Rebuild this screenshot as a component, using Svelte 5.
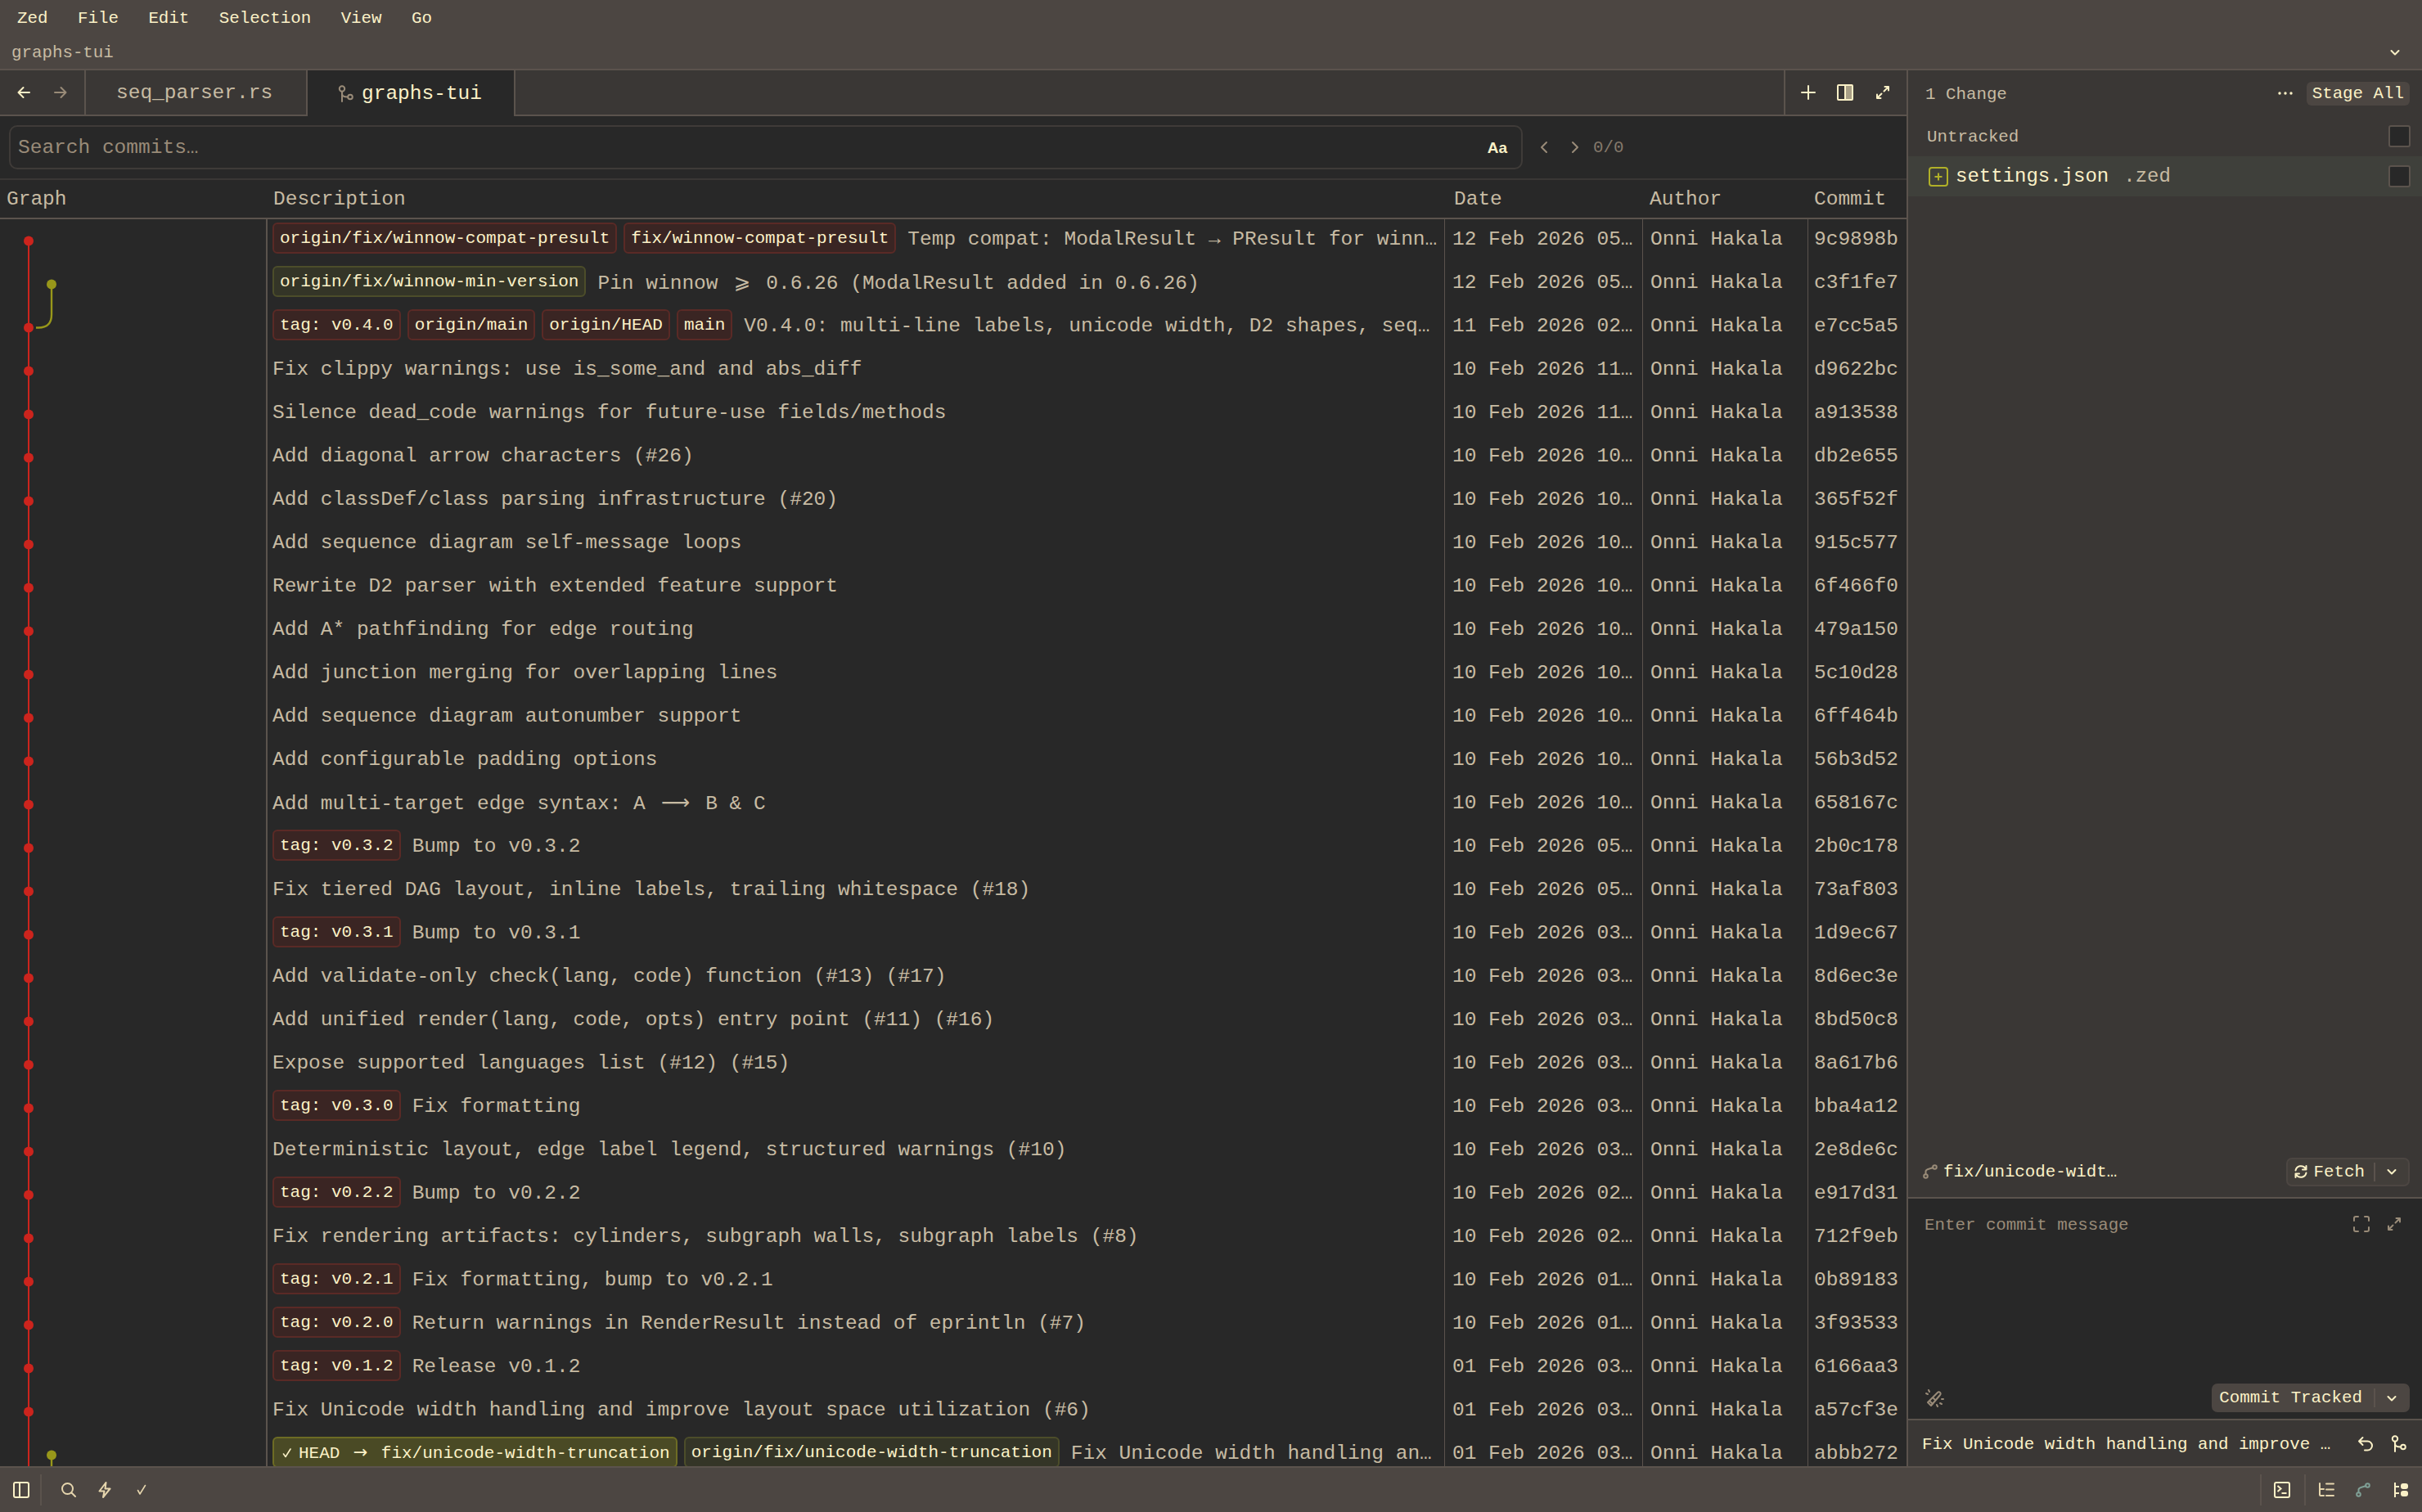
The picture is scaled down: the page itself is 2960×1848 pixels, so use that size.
<script>
  const menu = ["Zed", "File", "Edit", "Selection", "View", "Go"];
  const rowHeight = 53;

  // tags: r = red lane, g = green lane, h = checked-out head
  const commits = [
    { tags: [["r", "origin/fix/winnow-compat-presult"], ["r", "fix/winnow-compat-presult"]], text: ["Temp compat: ModalResult → PResult for winn…"], date: "12 Feb 2026 05…", hash: "9c9898b" },
    { tags: [["g", "origin/fix/winnow-min-version"]], text: ["Pin winnow ", { wide: "⩾", cells: 2 }, " 0.6.26 (ModalResult added in 0.6.26)"], date: "12 Feb 2026 05…", hash: "c3f1fe7" },
    { tags: [["r", "tag: v0.4.0"], ["r", "origin/main"], ["r", "origin/HEAD"], ["r", "main"]], text: ["V0.4.0: multi-line labels, unicode width, D2 shapes, seq…"], date: "11 Feb 2026 02…", hash: "e7cc5a5" },
    { text: ["Fix clippy warnings: use is_some_and and abs_diff"], date: "10 Feb 2026 11…", hash: "d9622bc" },
    { text: ["Silence dead_code warnings for future-use fields/methods"], date: "10 Feb 2026 11…", hash: "a913538" },
    { text: ["Add diagonal arrow characters (#26)"], date: "10 Feb 2026 10…", hash: "db2e655" },
    { text: ["Add classDef/class parsing infrastructure (#20)"], date: "10 Feb 2026 10…", hash: "365f52f" },
    { text: ["Add sequence diagram self-message loops"], date: "10 Feb 2026 10…", hash: "915c577" },
    { text: ["Rewrite D2 parser with extended feature support"], date: "10 Feb 2026 10…", hash: "6f466f0" },
    { text: ["Add A* pathfinding for edge routing"], date: "10 Feb 2026 10…", hash: "479a150" },
    { text: ["Add junction merging for overlapping lines"], date: "10 Feb 2026 10…", hash: "5c10d28" },
    { text: ["Add sequence diagram autonumber support"], date: "10 Feb 2026 10…", hash: "6ff464b" },
    { text: ["Add configurable padding options"], date: "10 Feb 2026 10…", hash: "56b3d52" },
    { text: ["Add multi-target edge syntax: A ", { wide: "⟶", cells: 3 }, " B & C"], date: "10 Feb 2026 10…", hash: "658167c" },
    { tags: [["r", "tag: v0.3.2"]], text: ["Bump to v0.3.2"], date: "10 Feb 2026 05…", hash: "2b0c178" },
    { text: ["Fix tiered DAG layout, inline labels, trailing whitespace (#18)"], date: "10 Feb 2026 05…", hash: "73af803" },
    { tags: [["r", "tag: v0.3.1"]], text: ["Bump to v0.3.1"], date: "10 Feb 2026 03…", hash: "1d9ec67" },
    { text: ["Add validate-only check(lang, code) function (#13) (#17)"], date: "10 Feb 2026 03…", hash: "8d6ec3e" },
    { text: ["Add unified render(lang, code, opts) entry point (#11) (#16)"], date: "10 Feb 2026 03…", hash: "8bd50c8" },
    { text: ["Expose supported languages list (#12) (#15)"], date: "10 Feb 2026 03…", hash: "8a617b6" },
    { tags: [["r", "tag: v0.3.0"]], text: ["Fix formatting"], date: "10 Feb 2026 03…", hash: "bba4a12" },
    { text: ["Deterministic layout, edge label legend, structured warnings (#10)"], date: "10 Feb 2026 03…", hash: "2e8de6c" },
    { tags: [["r", "tag: v0.2.2"]], text: ["Bump to v0.2.2"], date: "10 Feb 2026 02…", hash: "e917d31" },
    { text: ["Fix rendering artifacts: cylinders, subgraph walls, subgraph labels (#8)"], date: "10 Feb 2026 02…", hash: "712f9eb" },
    { tags: [["r", "tag: v0.2.1"]], text: ["Fix formatting, bump to v0.2.1"], date: "10 Feb 2026 01…", hash: "0b89183" },
    { tags: [["r", "tag: v0.2.0"]], text: ["Return warnings in RenderResult instead of eprintln (#7)"], date: "10 Feb 2026 01…", hash: "3f93533" },
    { tags: [["r", "tag: v0.1.2"]], text: ["Release v0.1.2"], date: "01 Feb 2026 03…", hash: "6166aa3" },
    { text: ["Fix Unicode width handling and improve layout space utilization (#6)"], date: "01 Feb 2026 03…", hash: "a57cf3e" },
    { tags: [["h", "HEAD"], ["g", "origin/fix/unicode-width-truncation"]], text: ["Fix Unicode width handling an…"], date: "01 Feb 2026 03…", hash: "abbb272" }
  ];

  const dotY = (i) => 26.5 + i * rowHeight;
  // commits that sit on the second lane
  const sideLane = [1, 28];
</script>

{#snippet chevron(cls = "")}
  <svg class="ic {cls}" width="16" height="16" viewBox="0 0 16 16"><path d="M3.5 6l4.5 4.5L12.5 6" /></svg>
{/snippet}

{#snippet expand(cls = "")}
  <svg class="ic {cls}" width="20" height="20" viewBox="0 0 20 20"><path d="M11.5 8.5L17 3M12.5 3H17V7.5M8.5 11.5L3 17M3 12.5V17H7.5" /></svg>
{/snippet}

{#snippet graphIcon(cls = "")}
  <svg class="ic {cls}" width="20" height="22" viewBox="0 0 20 22"><circle cx="5" cy="4.5" r="3.2" /><path d="M5 7.7V20M5 10c0 3.5 2 4.5 7 4.5" /><circle cx="15" cy="14.5" r="2.8" /></svg>
{/snippet}

{#snippet branchIcon(cls = "")}
  <svg class="ic {cls}" width="18" height="18" viewBox="0 0 18 18"><circle cx="3.5" cy="14.5" r="2.3" /><circle cx="14.5" cy="3.5" r="2.3" /><path d="M3.5 12.2V8.500C3.500 5.500 8 6 12.300 4" /></svg>
{/snippet}

<div class="window">
  <header class="titlebar">
    <nav class="menu">
      {#each menu as item}<span>{item}</span>{/each}
    </nav>
    <div class="project">
      <span>graphs-tui</span>
      {@render chevron("strong")}
    </div>
  </header>

  <main class="main">
    <section class="left">
      <div class="tabbar">
        <div class="nav-btns">
          <svg class="ic strong" width="18" height="18" viewBox="0 0 18 18"><path d="M16 9H2.5M8.5 3L2.5 9l6 6" /></svg>
          <svg class="ic dim" width="18" height="18" viewBox="0 0 18 18"><path d="M2 9h13.5M9.5 3l6 6-6 6" /></svg>
        </div>
        <div class="tab">seq_parser.rs</div>
        <div class="tab active">
          {@render graphIcon("muted")}
          <span>graphs-tui</span>
        </div>
        <div class="tab-fill"></div>
        <div class="tab-actions">
          <svg class="ic strong" width="18" height="18" viewBox="0 0 18 18"><path d="M9 1v16M1 9h16" /></svg>
          <svg width="20" height="20" viewBox="0 0 20 20"><rect x="1" y="1" width="18" height="18" rx="1" fill="none" stroke="#fbf1c7" stroke-width="2" /><rect x="10" y="2" width="8" height="16" fill="#a89f86" /><path d="M10 1v18" stroke="#fbf1c7" stroke-width="2" /></svg>
          {@render expand("strong")}
        </div>
      </div>

      <div class="searchbar">
        <div class="search-input">
          <span class="placeholder">Search commits…</span>
          <b class="aa">Aa</b>
        </div>
        <svg class="ic muted nav-chev" width="14" height="18" viewBox="0 0 14 18"><path d="M10 3L4 9l6 6" /></svg>
        <svg class="ic muted nav-chev" width="14" height="18" viewBox="0 0 14 18"><path d="M4 3l6 6-6 6" /></svg>
        <span class="count">0/0</span>
      </div>

      <div class="table-head">
        <span class="c-graph">Graph</span>
        <span class="c-desc">Description</span>
        <span class="c-date">Date</span>
        <span class="c-author">Author</span>
        <span class="c-hash">Commit</span>
      </div>

      <div class="table">
        <svg class="graph" width="325" height={commits.length * rowHeight}>
          <path d="M35 {dotY(0)}V{dotY(29)}" stroke="#cc241d" stroke-width="2" fill="none" />
          <path d="M63 {dotY(1)}V{dotY(2) - 16}Q63 {dotY(2)} 47 {dotY(2)}H44" stroke="#98971a" stroke-width="2.4" fill="none" />
          <path d="M63 {dotY(28)}V{dotY(29)}" stroke="#98971a" stroke-width="2.4" fill="none" />
          {#each commits as _, i}
            {#if sideLane.includes(i)}
              <circle cx="63" cy={dotY(i)} r="6" fill="#98971a" />
            {:else}
              <circle cx="35" cy={dotY(i)} r="6" fill="#cc241d" />
            {/if}
          {/each}
        </svg>
        <div class="rows">
          {#each commits as c}
            <div class="row">
              <div class="cell desc">
                {#each c.tags ?? [] as [kind, label]}
                  <span class="tag {kind}">{#if kind === "h"}<svg class="ic check" width="14" height="16" viewBox="0 0 14 16"><path d="M2.500 9l2.500 3.500L11 3" /></svg><span>{label}<span class="wide w2">→</span>fix/unicode-width-truncation</span>{:else}{label}{/if}</span>
                {/each}
                <span class="msg">{#each c.text as part}{#if typeof part === "string"}{part}{:else}<span class="wide w{part.cells}">{part.wide}</span>{/if}{/each}</span>
              </div>
              <div class="cell date">{c.date}</div>
              <div class="cell author">Onni Hakala</div>
              <div class="cell hash">{c.hash}</div>
            </div>
          {/each}
        </div>
      </div>
    </section>

    <aside class="panel">
      <div class="changes">
        <span class="changes-label">1 Change</span>
        <span class="changes-right">
          <svg width="20" height="6" viewBox="0 0 20 6" fill="#fbf1c7"><circle cx="3" cy="3" r="1.700" /><circle cx="10" cy="3" r="1.700" /><circle cx="17" cy="3" r="1.700" /></svg>
          <span class="stage">Stage All</span>
        </span>
      </div>
      <div class="section-head">
        <span class="section-label">Untracked</span>
        <span class="checkbox"></span>
      </div>
      <div class="file-row">
        <svg width="24" height="24" viewBox="0 0 24 24" fill="none" stroke="#b0b028" stroke-width="2"><rect x="1" y="1" width="22" height="22" rx="3" /><path d="M12 7.5v9M7.5 12h9" /></svg>
        <span class="file-name">settings.json</span>
        <span class="file-dir">.zed</span>
        <span class="checkbox end"></span>
      </div>
      <div class="panel-fill"></div>
      <div class="branch-row">
        {@render branchIcon("muted")}
        <span class="branch-name">fix/unicode-widt…</span>
        <div class="split-btn fetch">
          <span class="split-main">
            <svg class="ic strong" width="18" height="18" viewBox="0 0 18 18"><path d="M2.5 7.5A6.7 6.7 0 0 1 14.5 5l1 1.5M15.5 2v4.500h-4.500M15.500 10.500A6.700 6.700 0 0 1 3.500 13l-1-1.500M2.500 16v-4.500H7" /></svg>
            Fetch
          </span>
          <span class="split-chev">{@render chevron("strong")}</span>
        </div>
      </div>
      <div class="editor">
        <div class="editor-top">
          <span class="placeholder small">Enter commit message</span>
          <span class="editor-icons">
            <svg class="ic muted" width="20" height="20" viewBox="0 0 20 20"><path d="M1 6V3a2 2 0 0 1 2-2h3M14 1h3a2 2 0 0 1 2 2v3M19 14v3a2 2 0 0 1-2 2h-3M6 19H3a2 2 0 0 1-2-2v-3" /></svg>
            {@render expand("muted")}
          </span>
        </div>
        <div class="editor-bottom">
          <svg class="ic muted" width="24" height="24" viewBox="0 0 24 24"><path d="M8 21L4 17 16 5c2-2 5 1 3 3zM10 19l-3-3M13 14l-3-3M2 6l2 1M5 2l1 2M19 18l2 1M15 20l1 2M21 13l2 0" /></svg>
          <div class="split-btn commit">
            <span class="split-main">Commit Tracked</span>
            <span class="split-chev">{@render chevron("strong")}</span>
          </div>
        </div>
      </div>
      <div class="last-commit">
        <span class="last-text">Fix Unicode width handling and improve …</span>
        <svg class="ic strong" width="20" height="20" viewBox="0 0 20 20"><path d="M6.500 2L2 6.500 6.500 11M2 6.500h10.500a5.500 5.500 0 0 1 0 11H9" /></svg>
        {@render graphIcon("strong")}
      </div>
    </aside>
  </main>

  <footer class="statusbar">
    <svg width="20" height="20" viewBox="0 0 20 20" fill="none" stroke="#fbf1c7" stroke-width="2"><rect x="1" y="1" width="18" height="18" rx="2" /><path d="M8 1v18" /></svg>
    <span class="vsep first"></span>
    <svg class="ic muted-light s-search" width="20" height="20" viewBox="0 0 20 20"><circle cx="8.500" cy="8.500" r="6.500" /><path d="M13.500 13.500L18 18" /></svg>
    <svg class="ic muted-light s-bolt" width="18" height="20" viewBox="0 0 18 20"><path d="M10.500 1L2.500 11.500h6L7 19l8.500-10.500h-6z" /></svg>
    <svg class="ic muted-light s-check" width="16" height="20" viewBox="0 0 16 20"><path d="M3.500 10.500l2.500 4.500L12.500 4.500" /></svg>
    <span class="status-fill"></span>
    <span class="vsep"></span>
    <svg class="s-term" width="20" height="20" viewBox="0 0 20 20" fill="none" stroke="#fbf1c7" stroke-width="2"><rect x="1" y="1" width="18" height="18" rx="2" /><path d="M4.500 5l4 3.500-4 3.500M9.500 14h6" /></svg>
    <span class="vsep"></span>
    <svg class="ic muted-light s-list" width="20" height="18" viewBox="0 0 20 18"><path d="M2 1v14a1 1 0 0 0 1 1h4M2 8h5M10 1.500h9M10 8.500h9M10 16h9" /></svg>
    <svg class="ic teal s-branch" width="18" height="18" viewBox="0 0 18 18"><circle cx="3.500" cy="14.500" r="2.300" /><circle cx="14.500" cy="3.500" r="2.300" /><path d="M3.500 12.200V8.500C3.500 5.500 8 6 12.300 4" /></svg>
    <svg class="s-tree" width="18" height="18" viewBox="0 0 18 18" fill="#fbf1c7"><path d="M1 0h2v18H1zM3 4h4v2H3zM3 12h4v2H3z" /><rect x="9" y="1" width="9" height="7" rx="3" /><rect x="9" y="10" width="9" height="7" rx="3" /></svg>
  </footer>
</div>

<style>
  :global(body) {
    margin: 0;
    background: #4c4642;
  }

  .window {
    display: flex;
    flex-direction: column;
    width: 2960px;
    height: 1848px;
    overflow: hidden;
    background: #4c4642;
    color: #c7bba3;
    font-family: "Liberation Mono", monospace;
    font-size: 20.8px;
    font-variant-ligatures: none;
  }

  .ic {
    flex: none;
    fill: none;
    stroke: currentColor;
    stroke-width: 2;
    stroke-linecap: round;
    stroke-linejoin: round;
  }
  .strong { color: #fbf1c7; }
  .muted { color: #998b78; }
  .dim { color: #998b78; }
  .muted-light { color: #e5d5ad; }
  .teal { color: #7f9f95; }

  .titlebar {
    flex: none;
    height: 84px;
    border-bottom: 2px solid #5b534d;
  }
  .menu {
    display: flex;
    align-items: center;
    gap: 36.5px;
    height: 44px;
    padding-left: 21px;
    color: #fbf1c7;
  }
  .project {
    display: flex;
    align-items: center;
    justify-content: space-between;
    height: 40px;
    padding: 0 25px 0 14px;
  }

  .main {
    display: flex;
    flex: 1;
    min-height: 0;
  }

  .left {
    display: flex;
    flex-direction: column;
    flex: none;
    width: 2330px;
    border-right: 2px solid #5b534d;
    background: #282828;
    font-size: 24.5px;
  }

  .tabbar {
    display: flex;
    flex: none;
    height: 56px;
    background: #3a3735;
  }
  .nav-btns {
    display: flex;
    align-items: center;
    gap: 27px;
    box-sizing: border-box;
    width: 105px;
    padding-left: 20px;
    border-right: 2px solid #5b534d;
    border-bottom: 2px solid #5b534d;
  }
  .tab {
    display: flex;
    align-items: center;
    box-sizing: border-box;
    width: 271px;
    padding: 1px 0 0 37px;
    border-right: 2px solid #5b534d;
    border-bottom: 2px solid #5b534d;
  }
  .tab.active {
    gap: 9px;
    width: 254px;
    border-bottom: none;
    background: #282828;
    color: #fbf1c7;
  }
  .tab-fill {
    flex: 1;
    border-bottom: 2px solid #5b534d;
  }
  .tab-actions {
    display: flex;
    align-items: center;
    gap: 26px;
    box-sizing: border-box;
    width: 150px;
    padding-left: 19px;
    border-left: 2px solid #5b534d;
    border-bottom: 2px solid #5b534d;
  }

  .searchbar {
    display: flex;
    align-items: center;
    flex: none;
    height: 76px;
    padding-left: 11px;
  }
  .search-input {
    display: flex;
    align-items: center;
    justify-content: space-between;
    box-sizing: border-box;
    width: 1850px;
    height: 54px;
    padding: 1px 17px 0 9px;
    border: 2px solid #3f3b38;
    border-radius: 10px;
  }
  .placeholder {
    color: #998b78;
  }
  .placeholder.small {
    font-size: 20.8px;
  }
  .aa {
    color: #fbf1c7;
    font-family: "Liberation Sans", sans-serif;
    font-size: 19px;
  }
  .nav-chev {
    margin-left: 19px;
  }
  .nav-chev + .nav-chev {
    margin-left: 24px;
  }
  .count {
    margin-left: 15px;
    color: #85796b;
    font-size: 20.8px;
  }

  .table-head {
    display: flex;
    align-items: center;
    flex: none;
    box-sizing: border-box;
    height: 50px;
    padding-top: 1px;
    border-top: 2px solid #3a3735;
    border-bottom: 2px solid #5b534d;
  }
  .c-graph { width: 326px; padding-left: 8px; box-sizing: border-box; }
  .c-desc { width: 1442px; padding-left: 8px; box-sizing: border-box; }
  .c-date { width: 240px; padding-left: 9px; box-sizing: border-box; }
  .c-author { width: 201px; padding-left: 8px; box-sizing: border-box; }
  .c-hash { padding-left: 8px; }

  .table {
    display: flex;
    flex: 1;
    min-height: 0;
    overflow: hidden;
  }
  .graph {
    flex: none;
  }
  .rows {
    flex: 1;
    min-width: 0;
  }
  .row {
    display: flex;
    height: 53px;
  }
  .cell {
    display: flex;
    align-items: center;
    box-sizing: border-box;
    padding-bottom: 5px;
    border-left: 1px solid #5b534d;
    white-space: pre;
  }
  .desc {
    gap: 8px;
    width: 1440px;
    padding-left: 6px;
    border-left-width: 2px;
    overflow: hidden;
  }
  .date { width: 242px; padding-left: 9px; }
  .author { width: 202px; padding-left: 9px; }
  .hash { width: 121px; padding-left: 7px; }

  .tag {
    display: flex;
    align-items: center;
    flex: none;
    box-sizing: border-box;
    height: 38px;
    margin-bottom: 2px;
    padding: 1px 7px 0;
    border: 2px solid;
    border-radius: 6px;
    color: #fbf1c7;
    font-size: 21px;
  }
  .tag.r { background: #3a2523; border-color: #5a2a26; }
  .tag.g { background: #343527; border-color: #4c4d2a; }
  .tag.h { background: #4a4a25; border-color: #6d6c24; padding-left: 9px; }
  .check { margin-right: 7px; stroke-width: 1.6; }
  .msg {
    margin-left: 6px;
  }
  .desc > .msg:first-child {
    margin-left: 0;
  }
  .wide {
    display: inline-block;
    text-align: center;
    font-family: "DejaVu Sans", sans-serif;
  }
  .w3 { width: 44px; }
  .msg .w2 { width: 29.4px; }
  .tag .w2 { width: 50.4px; }

  .panel {
    display: flex;
    flex-direction: column;
    flex: 1;
    min-width: 0;
    background: #3a3735;
  }
  .changes {
    display: flex;
    align-items: center;
    justify-content: space-between;
    flex: none;
    height: 56px;
    padding: 0 15px 0 21px;
  }
  .changes-label {
    padding-top: 2px;
  }
  .changes-right {
    display: flex;
    align-items: center;
    gap: 16px;
  }
  .stage {
    padding: 3px 7px;
    border-radius: 6px;
    background: #4c4642;
    color: #fbf1c7;
  }
  .section-head {
    display: flex;
    align-items: center;
    justify-content: space-between;
    flex: none;
    height: 49px;
    padding: 0 14px 0 23px;
  }
  .section-label {
    padding-top: 1px;
  }
  .checkbox {
    box-sizing: border-box;
    width: 27px;
    height: 27px;
    border: 2px solid #5b534d;
    border-radius: 3px;
    background: #282828;
  }
  .file-row {
    display: flex;
    align-items: center;
    flex: none;
    height: 49px;
    padding: 0 14px 0 25px;
    background: #3f403b;
    font-size: 24px;
  }
  .file-name {
    margin-left: 9px;
    color: #fbf1c7;
  }
  .file-dir {
    margin-left: 18px;
  }
  .checkbox.end {
    margin-left: auto;
  }
  .panel-fill {
    flex: 1;
  }
  .branch-row {
    display: flex;
    align-items: center;
    flex: none;
    height: 58px;
    padding: 0 15px 2px 18px;
    border-bottom: 2px solid #5b534d;
  }
  .branch-name {
    margin-left: 7px;
    color: #fbf1c7;
  }
  .split-btn {
    display: flex;
    align-items: center;
    box-sizing: border-box;
    margin-left: auto;
    height: 35px;
    border: 2px solid #4c4642;
    border-radius: 7px;
    color: #fbf1c7;
  }
  .split-main {
    display: flex;
    align-items: center;
    gap: 7px;
    padding: 0 11px 0 7px;
    border-right: 2px solid #5b534d;
  }
  .split-chev {
    display: flex;
    padding: 0 12px;
  }
  .fetch { background: #423e3a; }
  .commit { background: #4c4642; }
  .commit .split-main { padding: 0 14px 0 7px; }
  .editor {
    display: flex;
    flex-direction: column;
    flex: none;
    box-sizing: border-box;
    height: 269px;
    padding: 21px 15px 8px 20px;
    background: #282828;
  }
  .editor-top {
    display: flex;
    align-items: flex-start;
    justify-content: space-between;
  }
  .editor-icons {
    display: flex;
    gap: 20px;
    padding-right: 9px;
  }
  .editor-bottom {
    display: flex;
    align-items: center;
    justify-content: space-between;
    margin-top: auto;
  }
  .last-commit {
    display: flex;
    align-items: center;
    flex: none;
    height: 58px;
    box-sizing: border-box;
    padding: 2px 18px 0 17px;
    border-top: 2px solid #5b534d;
    color: #fbf1c7;
  }
  .last-text {
    margin-right: auto;
  }
  .last-commit svg + :global(svg) {
    margin-left: 21px;
  }

  .statusbar {
    display: flex;
    align-items: center;
    flex: none;
    box-sizing: border-box;
    height: 56px;
    padding: 0 17px 0 16px;
    border-top: 2px solid #5b534d;
  }
  .vsep {
    width: 2px;
    height: 38px;
    margin: 0 16px;
    background: #5b534d;
  }
  .vsep.first { margin: 0 0 0 13px; }
  .s-search { margin-left: 23px; }
  .s-bolt { margin-left: 25px; }
  .s-check { margin-left: 28px; stroke-width: 1.6; }
  .status-fill { flex: 1; }
  .s-term { margin: 0 1px 0 -1px; }
  .s-list { margin-left: -1px; }
  .s-branch { margin-left: 26px; }
  .s-tree { margin-left: 28px; }
</style>
